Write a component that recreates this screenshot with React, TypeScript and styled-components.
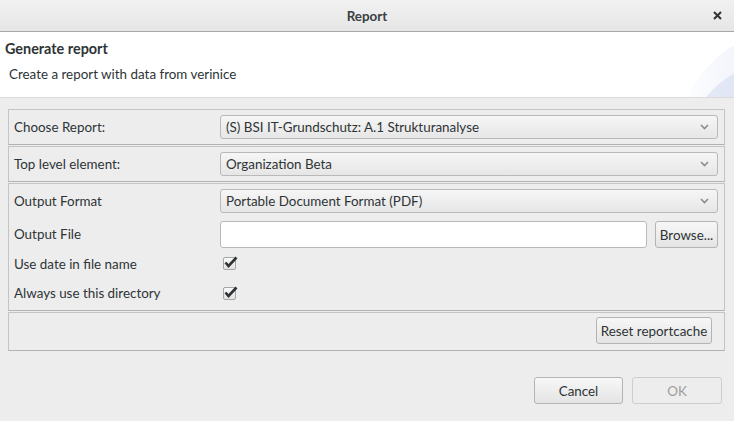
import styled, { createGlobalStyle } from "styled-components";

const GlobalStyle = createGlobalStyle`
  html, body {
    margin: 0;
    padding: 0;
    background: #ededed;
  }
  body {
    font-family: Lato, "Open Sans", "DejaVu Sans", sans-serif;
    font-size: 13.4px;
    color: #2e3436;
  }
`;

const StWindow = styled.div`
  width: 734px;
  height: 421px;
  display: flex;
  flex-direction: column;
  background: #ededed;
  overflow: hidden;
`;

const StTitleBar = styled.div`
  height: 31px;
  display: grid;
  grid-template-columns: 1fr auto 1fr;
  align-items: center;
  background: linear-gradient(#f1f1f1, #e6e6e6);
  border-bottom: 1px solid #a8a8a8;
  flex-shrink: 0;
`;

const StTitle = styled.div`
  grid-column: 2;
  font-size: 13.4px;
  font-weight: 700;
  color: #3a3f41;
`;

const StClose = styled.div`
  justify-self: end;
  margin-right: 12px;
  display: flex;
`;

const StHeader = styled.div`
  position: relative;
  height: 66px;
  background: #fff;
  border-bottom: 1px solid #dadada;
  padding: 8px 0 0 5px;
  box-sizing: border-box;
  flex-shrink: 0;
  overflow: hidden;
`;

const StHeaderTitle = styled.div`
  position: relative;
  z-index: 1;
  font-size: 14.4px;
  font-weight: 700;
  color: #2e3436;
  line-height: 18px;
`;

const StHeaderText = styled.div`
  position: relative;
  z-index: 1;
  margin: 7px 0 0 4px;
  line-height: 18px;
`;

const StDecoration = styled.svg`
  position: absolute;
  right: 0;
  top: 0;
`;

const StBody = styled.div`
  padding: 11px 9px 0 8px;
  display: flex;
  flex-direction: column;
  gap: 1px;
`;

const StGroup = styled.div<{ pad?: string }>`
  border: 1px solid #c4c4c4;
  border-bottom-color: #b2b2b2;
  padding: ${(p) => p.pad || "5px 6px 5px 0"};
  display: flex;
  flex-direction: column;
`;

const StRow = styled.div<{ h?: number }>`
  display: grid;
  grid-template-columns: 211px 1fr;
  align-items: center;
  height: ${(p) => (p.h ? `${p.h}px` : "auto")};
`;

const StLabel = styled.label`
  padding-left: 5px;
  user-select: none;
`;

const StCombo = styled.div`
  height: 22px;
  display: flex;
  align-items: center;
  justify-content: space-between;
  padding: 0 8px 0 5px;
  border: 1px solid #b9b9b9;
  border-radius: 3px;
  background: linear-gradient(#f6f6f6, #e6e6e6);
  color: #2e3436;
`;

const StFileLine = styled.div`
  display: flex;
  gap: 8px;
  align-items: center;
`;

const StInput = styled.div`
  flex: 1;
  height: 25px;
  border: 1px solid #b9b9b9;
  border-radius: 3px;
  background: #fff;
`;

const StButton = styled.button<{ w?: number; disabled?: boolean }>`
  width: ${(p) => (p.w ? `${p.w}px` : "auto")};
  height: 27px;
  padding: 0 2px;
  white-space: nowrap;
  border: 1px solid ${(p) => (p.disabled ? "#cdcdcd" : "#b4b4b4")};
  border-radius: 3px;
  background: ${(p) =>
    p.disabled ? "#ededed" : "linear-gradient(#f7f7f7, #e4e4e4)"};
  color: ${(p) => (p.disabled ? "#9d9d9d" : "#2e3436")};
  font-family: inherit;
  font-size: 13.4px;
`;

const StCheck = styled.div`
  width: 11px;
  height: 11px;
  margin-left: 3px;
  border: 1px solid #a6a6a6;
  border-radius: 2px;
  background: linear-gradient(#fafafa, #e2e2e2);
  position: relative;
`;

const StTick = styled.svg`
  position: absolute;
  left: -1px;
  top: -3px;
`;

const StResetLine = styled.div`
  display: flex;
  justify-content: flex-end;
`;

const StFooter = styled.div`
  display: flex;
  justify-content: flex-end;
  gap: 9px;
  padding: 26px 12px 0 0;
`;

const Chevron = () => (
  <svg width="9" height="6" viewBox="0 0 9 6">
    <path d="M1 1 L4.5 4.5 L8 1" stroke="#8c8c8c" strokeWidth="1.6" fill="none" />
  </svg>
);

const Combo = ({ value }: { value: string }) => (
  <StCombo>
    <span>{value}</span>
    <Chevron />
  </StCombo>
);

const Check = () => (
  <StCheck>
    <StTick width="16" height="14" viewBox="0 0 16 14">
      <path d="M2.5 7.5 L5.5 11 L13.5 2.5" stroke="#2e3436" strokeWidth="2.6" fill="none" />
    </StTick>
  </StCheck>
);

export default function App() {
  return (
    <>
      <GlobalStyle />
      <StWindow>
        <StTitleBar>
          <StTitle>Report</StTitle>
          <StClose>
            <svg width="9" height="9" viewBox="0 0 9 9">
              <path d="M1 1 L8 8 M8 1 L1 8" stroke="#2e3436" strokeWidth="2" />
            </svg>
          </StClose>
        </StTitleBar>
        <StHeader>
          <StHeaderTitle>Generate report</StHeaderTitle>
          <StHeaderText>Create a report with data from verinice</StHeaderText>
          <StDecoration width="90" height="66" viewBox="0 0 90 66">
            <defs>
              <linearGradient id="g1" x1="0" y1="0" x2="1" y2="0">
                <stop offset="0" stopColor="#ffffff" />
                <stop offset="0.45" stopColor="#e9edf8" />
                <stop offset="1" stopColor="#dde3f4" />
              </linearGradient>
              <linearGradient id="g2" x1="0" y1="0" x2="1" y2="0">
                <stop offset="0" stopColor="#e6eaf7" />
                <stop offset="1" stopColor="#d3dbf1" />
              </linearGradient>
            </defs>
            <circle cx="150" cy="115" r="118" fill="url(#g1)" />
            <circle cx="140" cy="128" r="100" fill="url(#g2)" />
          </StDecoration>
        </StHeader>
        <StBody>
          <StGroup>
            <StRow>
              <StLabel>Choose Report:</StLabel>
              <Combo value="(S) BSI IT-Grundschutz: A.1 Strukturanalyse" />
            </StRow>
          </StGroup>
          <StGroup>
            <StRow>
              <StLabel>Top level element:</StLabel>
              <Combo value="Organization Beta" />
            </StRow>
          </StGroup>
          <StGroup pad="5px 6px 3px 0">
            <StRow>
              <StLabel>Output Format</StLabel>
              <Combo value="Portable Document Format (PDF)" />
            </StRow>
            <StRow h={35} style={{ alignItems: "end" }}>
              <StLabel style={{ alignSelf: "center", marginTop: 6 }}>Output File</StLabel>
              <StFileLine>
                <StInput />
                <StButton w={63}>Browse...</StButton>
              </StFileLine>
            </StRow>
            <StRow h={31}>
              <StLabel>Use date in file name</StLabel>
              <Check />
            </StRow>
            <StRow h={28}>
              <StLabel>Always use this directory</StLabel>
              <Check />
            </StRow>
          </StGroup>
          <StGroup pad="4px 12px 6px 0">
            <StResetLine>
              <StButton w={116}>Reset reportcache</StButton>
            </StResetLine>
          </StGroup>
        </StBody>
        <StFooter>
          <StButton w={89}>Cancel</StButton>
          <StButton w={90} disabled>
            OK
          </StButton>
        </StFooter>
      </StWindow>
    </>
  );
}
